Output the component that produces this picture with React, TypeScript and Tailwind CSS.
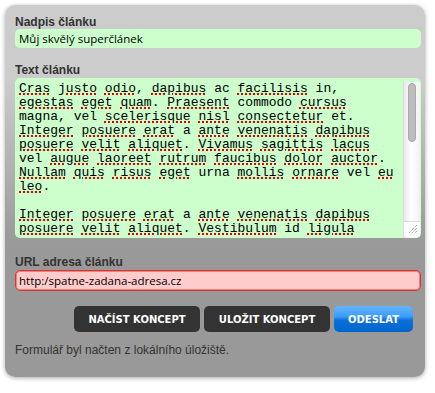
import React from "react";

const lines = [
  "Cras justo odio, dapibus ac facilisis in,",
  "egestas eget quam. Praesent commodo cursus",
  "magna, vel scelerisque nisl consectetur et.",
  "Integer posuere erat a ante venenatis dapibus",
  "posuere velit aliquet. Vivamus sagittis lacus",
  "vel augue laoreet rutrum faucibus dolor auctor.",
  "Nullam quis risus eget urna mollis ornare vel eu",
  "leo.",
  "",
  "Integer posuere erat a ante venenatis dapibus",
  "posuere velit aliquet. Vestibulum id ligula",
];

// words the spell checker did not mark
const known = new Set(["ac", "in", "commodo", "magna", "vel", "et", "a", "urna", "id"]);

const SpellLine = ({ text }: { text: string }) => {
  if (!text) return <div className="h-[14px]" />;
  const tokens = text.split(" ");
  return (
    <div className="h-[14px]">
      {tokens.map((tok, i) => {
        const m = tok.match(/^([A-Za-z]+)(.*)$/);
        const word = m ? m[1] : tok;
        const rest = m ? m[2] : "";
        const marked = !known.has(word.toLowerCase());
        return (
          <React.Fragment key={i}>
            {marked ? (
              <span className="underline decoration-dotted decoration-[#e00000] decoration-2 underline-offset-[1px]">
                {word}
              </span>
            ) : (
              word
            )}
            {rest}
            {i < tokens.length - 1 ? " " : ""}
          </React.Fragment>
        );
      })}
    </div>
  );
};

const Label = ({ children, className = "" }: { children: React.ReactNode; className?: string }) => (
  <div className={`h-[14px] text-[12px] leading-[14px] font-bold text-[#333] font-['Liberation_Sans',Arial,sans-serif] ${className}`}>
    {children}
  </div>
);

export default function App() {
  return (
    <div className="w-[435px] h-[393px] bg-white overflow-hidden pt-[5px] pl-[5px]">
      <div className="w-[420px] h-[372px] rounded-[10px] bg-[linear-gradient(to_bottom,#cccccc_20%,#999999_64%)] shadow-[0_1px_4px_rgba(0,0,0,0.35)] pt-[10px] pl-[10px]">
        {/* Title */}
        <Label>Nadpis článku</Label>
        <input
          type="text"
          defaultValue="Můj skvělý superčlánek"
          className="block w-[406px] h-[19px] rounded-[5px] bg-[#ccffcc] px-[4px] text-[11.5px] text-black outline-none font-['Open_Sans',sans-serif]"
        />

        {/* Body */}
        <Label className="mt-[15px]">Text článku</Label>
        <div className="mt-[1px] w-[406px] h-[160px] rounded-[5px] bg-[#ccffcc] flex overflow-hidden">
          <div className="flex-1 pl-[4px] pt-[4px] font-['Liberation_Mono','Courier_New',monospace] text-[13px] leading-[14px] text-black whitespace-pre overflow-hidden">
            {lines.map((l, i) => (
              <SpellLine key={i} text={l} />
            ))}
          </div>
          <div className="w-[17px] mr-[1px] mt-[4px] flex flex-col bg-[linear-gradient(to_right,#e9e9e9,#ffffff_45%,#f2f2f2)] border-l border-[#dcdcdc]">
            <div className="flex-1 pt-[1px] flex justify-center">
              <div className="w-[8px] h-[59px] rounded-full bg-[#bdbdbd] border border-[#a9a9a9]" />
            </div>
            <div className="h-[15px] mb-[2px] bg-white border-t border-[#dcdcdc] flex items-end justify-end pr-[2px] pb-[2px]">
              <svg width="11" height="11" viewBox="0 0 11 11">
                <path d="M10 2 L2 10 M10 5 L5 10 M10 8 L8 10" stroke="#8a8a8a" strokeWidth="1" strokeDasharray="1 1" />
              </svg>
            </div>
          </div>
        </div>

        {/* URL */}
        <Label className="mt-[17px]">URL adresa článku</Label>
        <input
          type="text"
          defaultValue="http:/spatne-zadana-adresa.cz"
          className="block mt-[1px] w-[406px] h-[21px] rounded-[5px] bg-[#ffcccc] border border-[#dd3333] shadow-[inset_0_0_0_1px_#f08080] px-[3px] text-[11.5px] text-black outline-none font-['Open_Sans',sans-serif]"
        />

        {/* Actions */}
        <div className="mt-[15px] w-[406px] pr-[8px] flex justify-end gap-[4px]">
          <button className="w-[126px] h-[26px] rounded-[5px] bg-[#333333] text-white text-[10px] font-bold font-['DejaVu_Sans',sans-serif]">
            NAČÍST KONCEPT
          </button>
          <button className="w-[126px] h-[26px] rounded-[5px] bg-[#333333] text-white text-[10px] font-bold font-['DejaVu_Sans',sans-serif]">
            ULOŽIT KONCEPT
          </button>
          <button className="w-[79px] h-[26px] rounded-[5px] bg-[linear-gradient(to_bottom,#66b5ff,#3d9dfa_40%,#0a6fd8_55%,#0066cc)] text-white text-[10px] font-bold font-['DejaVu_Sans',sans-serif]">
            ODESLAT
          </button>
        </div>

        <div className="mt-[11px] text-[12px] leading-[14px] text-[#333] font-['Liberation_Sans',Arial,sans-serif]">
          Formulář byl načten z lokálního úložiště.
        </div>
      </div>
    </div>
  );
}
